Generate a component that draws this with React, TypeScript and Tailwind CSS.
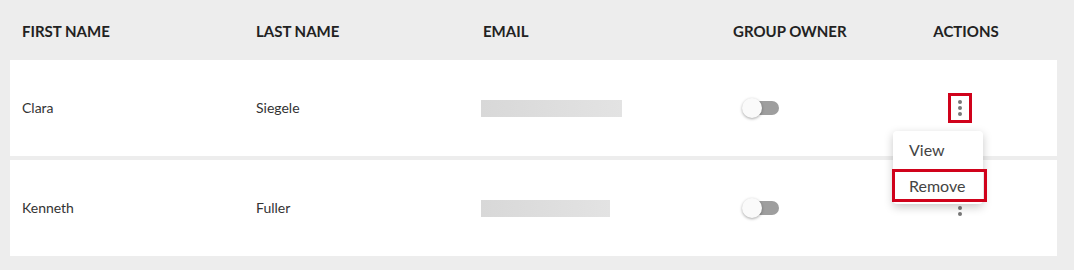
import React from "react";

type Member = {
  first: string;
  last: string;
  emailWidth: number;
  menuOpen: boolean;
};

const members: Member[] = [
  { first: "Clara", last: "Siegele", emailWidth: 141, menuOpen: true },
  { first: "Kenneth", last: "Fuller", emailWidth: 129, menuOpen: false },
];

function Toggle() {
  return (
    <div className="relative w-[37px] h-[20px]">
      <div className="absolute left-[3px] top-[3px] w-[34px] h-[14px] rounded-full bg-[#9e9e9e]" />
      <div className="absolute left-0 top-0 w-[20px] h-[20px] rounded-full bg-[#fafafa] shadow-[0_1px_3px_rgba(0,0,0,0.35)]" />
    </div>
  );
}

function Dots() {
  return (
    <div className="flex flex-col items-center gap-[2px]">
      <span className="w-[4px] h-[4px] rounded-full bg-[#777]" />
      <span className="w-[4px] h-[4px] rounded-full bg-[#777]" />
      <span className="w-[4px] h-[4px] rounded-full bg-[#777]" />
    </div>
  );
}

function Actions({ open }: { open: boolean }) {
  if (!open) {
    return (
      <div className="w-[24px] h-[30px] flex items-center justify-center">
        <Dots />
      </div>
    );
  }
  return (
    <div className="relative">
      <div className="w-[24px] h-[30px] flex items-center justify-center border-[3px] border-[#d0021b]">
        <Dots />
      </div>
      <div className="absolute left-[-55px] top-[38px] z-10 w-[90px] pt-[1px] pb-[1px] bg-white rounded-[4px] shadow-[0_3px_10px_rgba(0,0,0,0.22)] text-[16px] text-[#444]">
        <div className="h-[36px] flex items-center pl-[16px]">View</div>
        <div className="relative h-[35px] flex items-center pl-[16px]">
          Remove
          <div className="absolute left-[-1px] right-[-4px] top-[1px] bottom-[1px] border-[3px] border-[#d0021b]" />
        </div>
      </div>
    </div>
  );
}

export default function App() {
  return (
    <div
      className="w-[1074px] h-[270px] bg-[#ededed] pl-[10px] pr-[17px] overflow-hidden"
      style={{ fontFamily: "Lato, 'Liberation Sans', sans-serif" }}
    >
      <div className="h-[60px] flex items-center pt-[2px] pl-[12px] text-[15px] font-bold text-[#222] uppercase">
        <div className="w-[234px]">First Name</div>
        <div className="w-[225px]">Last Name</div>
        <div className="w-[252px] pl-[2px]">Email</div>
        <div className="w-[170px]">Group Owner</div>
        <div className="w-[126px] text-center">Actions</div>
      </div>

      <div className="flex flex-col gap-[4px]">
        {members.map((m) => (
          <div
            key={m.first}
            className="h-[96px] bg-white flex items-center pl-[12px] text-[14px] text-[#333]"
          >
            <div className="w-[234px] pb-[1px]">{m.first}</div>
            <div className="w-[225px] pb-[1px]">{m.last}</div>
            <div className="w-[252px]">
              <div
                className="h-[17px] bg-linear-to-r from-[#d8d8d8] to-[#e3e3e3]"
                style={{ width: m.emailWidth }}
              />
            </div>
            <div className="w-[170px] pl-[9px]">
              <Toggle />
            </div>
            <div className="w-[126px] flex justify-center pr-[12px]">
              <Actions open={m.menuOpen} />
            </div>
          </div>
        ))}
      </div>
    </div>
  );
}
